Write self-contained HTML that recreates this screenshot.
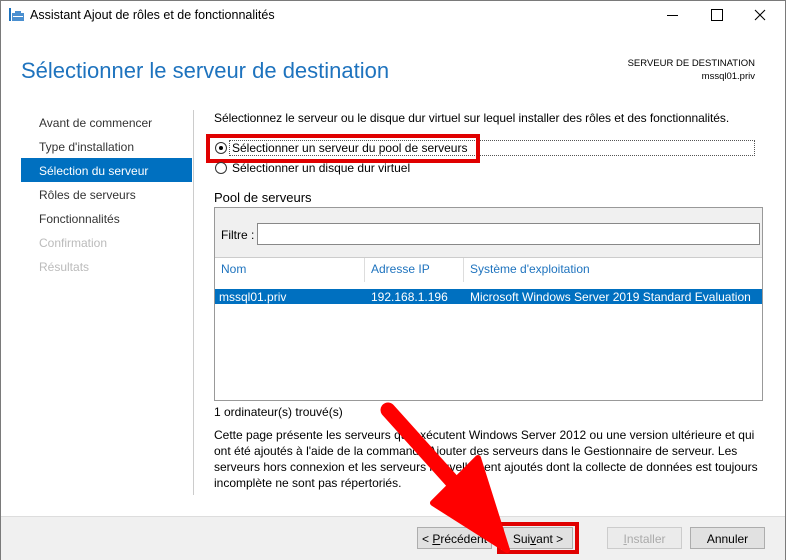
<!DOCTYPE html><html><head><style>
body{margin:0;width:786px;height:560px;overflow:hidden;background:#fff;font-family:"Liberation Sans",sans-serif;font-size:12px;color:#000;position:relative}
.a{position:absolute;white-space:nowrap}
.nav{font-size:12px;color:#333}
.btn{position:absolute;top:527px;height:22px;border:1px solid #adadad;background:#e1e1e1;font-size:12px;text-align:center;line-height:22px;box-sizing:border-box}
</style></head><body>
<div class="a" style="left:0;top:0;width:784px;height:558px;border:1px solid #7a7a7a"></div>
<svg class="a" style="left:9px;top:8px" width="16" height="14"><rect x="0" y="0" width="2" height="13" fill="#1e73be"/><rect x="3" y="5" width="12" height="8" fill="#4a8fd0"/><rect x="6" y="3" width="6" height="2" fill="#4a8fd0"/><rect x="4" y="8" width="10" height="1" fill="#fff"/></svg>
<div class="a" style="left:30px;top:8px;font-size:12.5px">Assistant Ajout de rôles et de fonctionnalités</div>
<div class="a" style="left:667px;top:15px;width:11px;height:1px;background:#000"></div>
<div class="a" style="left:711px;top:9px;width:10px;height:10px;border:1px solid #000"></div>
<svg class="a" style="left:754px;top:9px" width="12" height="12"><path d="M1 1L11 11M11 1L1 11" stroke="#000" stroke-width="1.1"/></svg>
<div class="a" style="left:21px;top:58px;font-size:22px;color:#1e73be">Sélectionner le serveur de destination</div>
<div class="a" style="right:31px;top:57px;font-size:9.5px;text-align:right;line-height:13px">SERVEUR DE DESTINATION<br>mssql01.priv</div>
<div class="a" style="left:193px;top:110px;width:1px;height:385px;background:#ccc"></div>
<div class="a nav" style="left:39px;top:116px">Avant de commencer</div>
<div class="a nav" style="left:39px;top:140px">Type d'installation</div>
<div class="a" style="left:21px;top:158px;width:171px;height:24px;background:#0070c0"></div>
<div class="a nav" style="left:39px;top:164px;color:#fff">Sélection du serveur</div>
<div class="a nav" style="left:39px;top:188px">Rôles de serveurs</div>
<div class="a nav" style="left:39px;top:212px">Fonctionnalités</div>
<div class="a nav" style="left:39px;top:236px;color:#bbb">Confirmation</div>
<div class="a nav" style="left:39px;top:260px;color:#bbb">Résultats</div>
<div class="a" style="left:214px;top:111px;letter-spacing:-0.05px">Sélectionnez le serveur ou le disque dur virtuel sur lequel installer des rôles et des fonctionnalités.</div>
<div class="a" style="left:229px;top:140px;width:524px;height:14px;border:1px dotted #555"></div>
<div class="a" style="left:215px;top:142px;width:10px;height:10px;border:1px solid #333;border-radius:50%"></div>
<div class="a" style="left:219px;top:146px;width:4px;height:4px;background:#000;border-radius:50%"></div>
<div class="a" style="left:232px;top:141px">Sélectionner un serveur du pool de serveurs</div>
<div class="a" style="left:206px;top:134px;width:266px;height:21px;border:4px solid #e00000"></div>
<div class="a" style="left:215px;top:162px;width:10px;height:10px;border:1px solid #333;border-radius:50%"></div>
<div class="a" style="left:232px;top:161px">Sélectionner un disque dur virtuel</div>
<div class="a" style="left:214px;top:190px;font-size:13px">Pool de serveurs</div>
<div class="a" style="left:214px;top:207px;width:549px;height:194px;border:1px solid #999;box-sizing:border-box"></div>
<div class="a" style="left:215px;top:208px;width:547px;height:49px;background:#f0f0f0;border-bottom:1px solid #ccc"></div>
<div class="a" style="left:221px;top:228px">Filtre :</div>
<div class="a" style="left:257px;top:223px;width:503px;height:22px;border:1px solid #888;background:#fff;box-sizing:border-box"></div>
<div class="a" style="left:221px;top:262px;color:#1e73be">Nom</div>
<div class="a" style="left:364px;top:258px;width:1px;height:24px;background:#ddd"></div>
<div class="a" style="left:371px;top:262px;color:#1e73be">Adresse IP</div>
<div class="a" style="left:463px;top:258px;width:1px;height:24px;background:#ddd"></div>
<div class="a" style="left:470px;top:262px;color:#1e73be">Système d'exploitation</div>
<div class="a" style="left:215px;top:289px;width:547px;height:15px;background:#0070c0"></div>
<div class="a" style="left:219px;top:290px;color:#fff">mssql01.priv</div>
<div class="a" style="left:371px;top:290px;color:#fff">192.168.1.196</div>
<div class="a" style="left:470px;top:290px;color:#fff">Microsoft Windows Server 2019 Standard Evaluation</div>
<div class="a" style="left:214px;top:405px">1 ordinateur(s) trouvé(s)</div>
<div class="a" style="left:214px;top:427px;line-height:16px;white-space:normal;width:545px">Cette page présente les serveurs qui exécutent Windows Server 2012 ou une version ultérieure et qui ont été ajoutés à l'aide de la commande Ajouter des serveurs dans le Gestionnaire de serveur. Les serveurs hors connexion et les serveurs nouvellement ajoutés dont la collecte de données est toujours incomplète ne sont pas répertoriés.</div>
<div class="a" style="left:1px;top:516px;width:784px;height:43px;background:#f0f0f0;border-top:1px solid #ddd"></div>
<div class="btn" style="left:417px;width:75px">&lt; <u>P</u>récédent</div>
<div class="btn" style="left:503px;width:70px">Sui<u>v</u>ant &gt;</div>
<div class="a" style="left:497px;top:522px;width:74px;height:24px;border:4px solid #e00000"></div>
<div class="btn" style="left:607px;width:75px;color:#aaa;background:#ebebeb;border-color:#ccc"><u>I</u>nstaller</div>
<div class="btn" style="left:690px;width:75px">Annuler</div>
<svg class="a" style="left:0;top:0" width="786" height="560"><line x1="388" y1="410" x2="460" y2="490" stroke="#f00" stroke-width="15" stroke-linecap="round"/><polygon points="433,503 478,458 507,550" fill="#f00" stroke="#f00" stroke-width="6" stroke-linejoin="round"/></svg>
</body></html>
